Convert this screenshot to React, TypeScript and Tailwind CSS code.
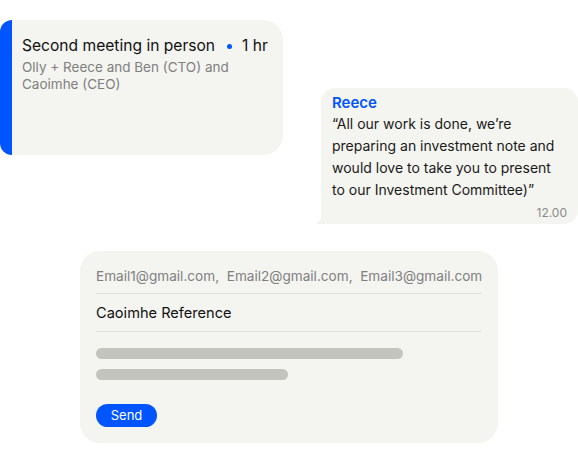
export default function App() {
  return (
    <div className="w-[578px] h-[474px] bg-white flex flex-col pt-[20px] overflow-hidden" style={{ fontFamily: "Inter, 'Noto Sans', sans-serif" }}>
      {/* meeting card */}
      <div className="w-[283px] h-[135px] rounded-r-[20px] rounded-l-[12px] bg-[#f4f4f0] flex overflow-hidden">
        <div className="w-[12px] bg-[#0055ff] shrink-0" />
        <div className="pl-[10px] pt-[16px]">
          <div className="flex items-center text-[15.6px] leading-[20px] text-[#111]">
            <span>Second meeting in person</span>
            <span className="w-[5px] h-[5px] rounded-full bg-[#0055ff] ml-[12px] mr-[10px]" />
            <span>1 hr</span>
          </div>
          <p className="mt-[3px] text-[13.5px] leading-[17px] text-[#808080] w-[220px]">
            Olly + Reece and Ben (CTO) and Caoimhe (CEO)
          </p>
        </div>
      </div>

      {/* chat bubble */}
      <div className="self-end relative w-[257px] -mt-[67px] rounded-[14px] rounded-bl-none bg-[#f4f4f0] pl-[11px] pr-[11px] pt-[5px] pb-[3px]">
        <div className="text-[15px] leading-[20px] font-semibold text-[#0055ff]">Reece</div>
        <p className="text-[14px] leading-[22px] text-[#1a1a1a]">
          “All our work is done, we’re preparing an investment note and would love to take you to present to our Investment Committee)”
        </p>
        <div className="mt-[4px] text-right text-[12px] leading-[16px] text-[#8a8a8a]">12.00</div>
        <svg className="absolute left-[-6px] bottom-0" width="8" height="10" viewBox="0 0 8 10">
          <path d="M8 0 V10 H0 C4 8 6 4 8 0 Z" fill="#f4f4f0" />
        </svg>
      </div>

      {/* email compose */}
      <div className="ml-[80px] mt-[27px] w-[418px] h-[192px] rounded-[20px] bg-[#f4f4f0] px-[16px] pt-[15px]">
        <div className="text-[13.6px] leading-[20px] text-[#808080] pb-[7px] border-b border-[#dfdfdb] whitespace-nowrap">
          Email1@gmail.com,&nbsp; Email2@gmail.com,&nbsp; Email3@gmail.com
        </div>
        <div className="text-[14.6px] leading-[20px] text-[#111] pt-[9px] pb-[8px] border-b border-[#dfdfdb]">
          Caoimhe Reference
        </div>
        <div className="mt-[16px] flex flex-col gap-[10px]">
          <div className="w-[307px] h-[11px] rounded-full bg-[#c4c4bf]" />
          <div className="w-[192px] h-[11px] rounded-full bg-[#c4c4bf]" />
        </div>
        <button className="mt-[24px] w-[61px] h-[23px] rounded-full bg-[#0055ff] text-white text-[13px] leading-[23px] text-center">
          Send
        </button>
      </div>
    </div>
  );
}
